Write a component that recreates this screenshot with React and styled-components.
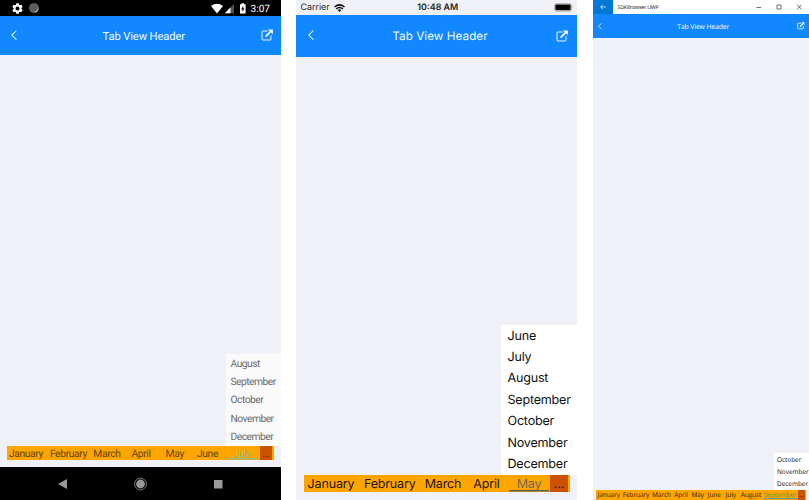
import React from "react";
import styled, { createGlobalStyle, ThemeProvider, css } from "styled-components";

const GlobalStyle = createGlobalStyle`
  * { box-sizing: border-box; }
  body { margin: 0; background: #fff; overflow: hidden; text-rendering: geometricPrecision; }
`;

const android = {
  font: 'Roboto, sans-serif',
  width: 281,
  header: { height: 38.5, font: 11.2, spacing: -0.12, left: 10.5, right: 8, icon: 12, up: 0, stroke: 1, shift: 4, drop: 2.5 },
  tabs: { height: 14, font: 10.3, spacing: -0.35, color: "#614500", margin: "0 7px 7px", selected: "#7fbf8d", line: 1.5, drop: 1 },
  menu: { width: 55.5, row: 18.3, pad: 5, font: 10.3, spacing: -0.53, color: "#6c6c6c", bg: "#fafafa", up: 0.7, drop: 1.6 },
  more: { width: 12.5, margin: "0 2px 0 0", color: "#642800" },
};

const ios = {
  font: 'Inter, sans-serif',
  width: 281,
  header: { height: 42, font: 11.7, spacing: 0.05, left: 12, right: 9, icon: 12, up: 1, stroke: 1, shift: 4, drop: 0 },
  tabs: { height: 17, font: 12.5, spacing: -0.15, color: "#1c1300", margin: "0 7.5px 8px", selected: "#6e6a5c", line: 1.5, drop: 2.5 },
  menu: { width: 76, row: 21.4, pad: 6.5, font: 12.6, spacing: -0.23, color: "#111", bg: "#fff", up: 0.7, drop: 2 },
  more: { width: 18, margin: "0 1.5px 0 0", color: "#2a1000" },
};

const uwp = {
  font: '"Open Sans", "Noto Sans", sans-serif',
  width: 216,
  header: { height: 24, font: 6.8, spacing: -0.1, left: 5, right: 4.5, icon: 7.5, up: 0, stroke: 1.3, shift: 4, drop: 0.5 },
  tabs: { height: 9.5, font: 6.5, spacing: -0.08, color: "#302100", margin: "0 3px 0.5px", selected: "#5c8e72", line: 1, drop: 0.5 },
  menu: { width: 35.5, row: 12.3, pad: 3.5, font: 6.5, spacing: -0.05, color: "#111", bg: "#fff", up: 0.3, drop: 1 },
  more: { width: 7, margin: "0 1px 0 0", color: "#3a1600" },
};

const Page = styled.main`
  display: flex;
  width: 809px;
  height: 500px;
  background: #fff;
`;

const Device = styled.section`
  display: flex;
  flex-direction: column;
  flex: none;
  width: ${(p) => p.theme.width}px;
  height: 500px;
  margin-left: ${(p) => p.$gap || 0}px;
  background: #f0f1f6;
  font-family: ${(p) => p.theme.font};
  overflow: hidden;
`;

const Header = styled.header`
  display: grid;
  grid-template-columns: 1fr auto 1fr;
  align-items: center;
  flex: none;
  height: ${(p) => p.theme.header.height}px;
  padding: 0 ${(p) => p.theme.header.right}px ${(p) => p.theme.header.up}px ${(p) => p.theme.header.left}px;
  background: #1188ff;
  color: #f2f8ff;

  svg { display: block; }
  svg:last-child { justify-self: end; }
`;

const Title = styled.h1`
  margin: ${(p) => p.theme.header.drop}px 0 0 ${(p) => p.theme.header.shift}px;
  font-size: ${(p) => p.theme.header.font}px;
  font-weight: 400;
  letter-spacing: ${(p) => p.theme.header.spacing}px;
  white-space: nowrap;
`;

const Content = styled.div`
  display: flex;
  flex: 1;
  min-height: 0;
  flex-direction: column;
  justify-content: flex-end;
`;

const Menu = styled.ul`
  align-self: flex-end;
  width: ${(p) => p.theme.menu.width}px;
  margin: 0;
  padding: 0 0 ${(p) => p.theme.menu.up}px;
  list-style: none;
  background: ${(p) => p.theme.menu.bg};
  color: ${(p) => p.theme.menu.color};
`;

const MenuItem = styled.li`
  height: ${(p) => p.theme.menu.row}px;
  padding-left: ${(p) => p.theme.menu.pad}px;
  font-size: ${(p) => p.theme.menu.font}px;
  line-height: ${(p) => p.theme.menu.row + p.theme.menu.drop}px;
  letter-spacing: ${(p) => p.theme.menu.spacing}px;
  white-space: nowrap;
`;

const TabBar = styled.nav`
  display: flex;
  flex: none;
  height: ${(p) => p.theme.tabs.height}px;
  margin: ${(p) => p.theme.tabs.margin};
  background: #ffa500;
`;

const Tab = styled.div`
  flex: none;
  width: ${(p) => p.$width}px;
  height: 100%;
  color: ${(p) => p.theme.tabs.color};
  font-size: ${(p) => p.theme.tabs.font}px;
  letter-spacing: ${(p) => p.theme.tabs.spacing}px;
  line-height: ${(p) => p.theme.tabs.height + p.theme.tabs.drop}px;
  text-align: center;
  white-space: nowrap;
  ${(p) => p.$selected && css`
    color: ${p.theme.tabs.selected};
    background: linear-gradient(${p.$line}, ${p.$line}) center bottom 0.6px / calc(100% - 2px) ${p.theme.tabs.line}px no-repeat;
  `}
`;

const More = styled.div`
  flex: none;
  width: ${(p) => p.theme.more.width}px;
  height: 100%;
  margin: ${(p) => p.theme.more.margin};
  margin-left: auto;
  background: #cb5200;
  color: ${(p) => p.theme.more.color};
  font-size: ${(p) => p.theme.tabs.font}px;
  line-height: ${(p) => p.theme.tabs.height + p.theme.tabs.drop}px;
  text-align: center;
`;

const AndroidStatus = styled.div`
  display: flex;
  align-items: center;
  flex: none;
  height: 16px;
  padding: 0 11px 0 12px;
  background: #000;
  color: #fff;
  font-size: 10.1px;
`;

const StatusIcons = styled.div`
  display: flex;
  align-items: center;
  gap: ${(p) => p.$gap}px;
  margin-left: ${(p) => (p.$end ? "auto" : "0")};
`;

const StatusTime = styled.span`
  padding-top: 2px;
`;

const AndroidNav = styled.div`
  display: grid;
  grid-template-columns: 101px 78px 78px;
  align-items: center;
  flex: none;
  height: 33px;
  background: #000;
  svg { justify-self: end; display: block; }
`;

const IosStatus = styled.div`
  display: grid;
  grid-template-columns: 1fr auto 1fr;
  align-items: center;
  flex: none;
  height: 15px;
  padding: 0 3px 0 4.5px;
  color: #222;
  font-size: 8.9px;
`;

const Carrier = styled.div`
  display: flex;
  align-items: center;
  gap: 4px;
`;

const Clock = styled.strong`
  margin-left: 1px;
  font-weight: 600;
`;

const BatteryBox = styled.div`
  display: flex;
  justify-content: flex-end;
`;

const WindowBar = styled.div`
  display: flex;
  align-items: center;
  flex: none;
  height: 14px;
  background: #fff;
`;

const WindowBack = styled.div`
  display: grid;
  place-items: center;
  width: 19.5px;
  height: 14px;
  background: #0078d7;
`;

const WindowTitle = styled.span`
  margin-left: 5px;
  color: #222;
  font-size: 5.4px;
  line-height: 13px;
  letter-spacing: -0.26px;
`;

const WindowButtons = styled.div`
  margin-left: auto;
  padding-right: 7px;
  svg { display: block; }
`;

const BackIcon = ({ height, stroke }) => (
  <svg width={height * 0.6} height={height} viewBox="0 0 6 10" fill="none" stroke="currentColor" strokeWidth={stroke}>
    <path d="M5.3 .5 .8 5l4.5 4.5" />
  </svg>
);

const OpenIcon = ({ size, stroke }) => (
  <svg width={size} height={size} viewBox="0 0 12 12" fill="none" stroke="currentColor" strokeWidth={stroke}>
    <path d="M6.8 2H1.800Q1 2 1 2.800v7.400q0 .8.8.8h7.400q.8 0 .8-.8V6.500" />
    <path d="m4.600 7.600 5.400-5.400" strokeWidth="1.800" />
    <path d="M7 .4h4.900v4.900z" fill="currentColor" stroke="none" />
  </svg>
);

const GearIcon = () => (
  <svg width="11" height="11" viewBox="2 2 20 20" fill="#fff">
    <path d="M19.14 12.94c.04-.3.06-.61.06-.94s-.02-.64-.07-.94l2.03-1.58a.5.5 0 0 0 .12-.61l-1.92-3.32a.5.5 0 0 0-.59-.22l-2.39.96a7 7 0 0 0-1.62-.94l-.36-2.54A.5.5 0 0 0 13.92 2.4h-3.84a.5.5 0 0 0-.47.41l-.36 2.54a7 7 0 0 0-1.62.94l-2.39-.96a.5.5 0 0 0-.59.22L2.74 8.87a.5.5 0 0 0 .12.61l2.03 1.58a6 6 0 0 0 0 1.88l-2.03 1.58a.5.5 0 0 0-.12.61l1.92 3.32c.12.22.37.29.59.22l2.39-.96c.5.38 1.03.7 1.62.94l.36 2.54c.05.24.24.41.47.41h3.84c.24 0 .44-.17.47-.41l.36-2.54a7 7 0 0 0 1.62-.94l2.39.96c.22.08.47 0 .59-.22l1.92-3.32a.5.5 0 0 0-.12-.61zM12 15.6A3.6 3.6 0 1 1 12 8.4a3.6 3.6 0 0 1 0 7.2z" />
  </svg>
);

const SyncIcon = () => (
  <svg width="10" height="10" viewBox="0 0 10 10">
    <circle cx="5" cy="5" r="4.8" fill="#777" />
    <circle cx="4.700" cy="4.700" r="4" fill="#5c5c5c" />
    <path d="M9.300 5.800A4.500 4.500 0 0 1 5.800 9.300" fill="none" stroke="#ccc" strokeWidth=".9" />
  </svg>
);

const AndroidIcons = () => (
  <svg width="36" height="12" viewBox="0 0 36 12" fill="#fff">
    <path d="M0 3.900Q6-.5 12 3.900L6 11.400z" />
    <path d="M23 2v9.200h-9.200z" fill="#505050" />
    <path d="M19.500 5.500v5.700h-5.700z" />
    <path fillRule="evenodd" d="M29 2.200h1.500v-1h2.600v1h1.500v9.200H29zM32.300 3.700l-2.100 3.500h1.200v2.800L33.500 6.500h-1.200z" />
  </svg>
);

const WifiIcon = () => (
  <svg width="11" height="8" viewBox="0 0 11 8" fill="none" stroke="#111" strokeWidth="1.5">
    <path d="M.5 3Q5.500-1.300 10.500 3M2.200 4.900Q5.500 2 8.800 4.900" />
    <path d="M3.700 6.100Q5.500 4.600 7.300 6.100L5.500 8z" fill="#111" stroke="none" />
  </svg>
);

const BatteryIcon = () => (
  <svg width="20" height="9" viewBox="0 0 20 9">
    <rect x=".5" y=".6" width="17" height="7.600" rx="1.800" fill="none" stroke="#999" strokeWidth=".7" />
    <rect x="1.400" y="1.500" width="15.200" height="5.800" rx="1" fill="#000" />
    <path d="M18.500 3.200q1 1.200 0 2.400z" fill="#999" />
  </svg>
);

const months = ["January", "February", "March", "April", "May", "June", "July", "August", "September", "October", "November", "December"];

function TabView({ widths, menuFrom, line }) {
  return (
    <Content>
      <Menu>
        {months.slice(menuFrom).map((m) => <MenuItem key={m}>{m}</MenuItem>)}
      </Menu>
      <TabBar>
        {widths.map((w, i) => (
          <Tab key={months[i]} $width={w} $selected={i === widths.length - 1} $line={line}>{months[i]}</Tab>
        ))}
        <More>...</More>
      </TabBar>
    </Content>
  );
}

function AppHeader({ theme }) {
  return (
    <Header>
      <BackIcon height={theme.header.icon * 0.85} stroke={theme.header.stroke} />
      <Title>Tab View Header</Title>
      <OpenIcon size={theme.header.icon} stroke={theme.header.stroke} />
    </Header>
  );
}

export default function App() {
  return (
    <Page>
      <GlobalStyle />
      <ThemeProvider theme={android}>
        <Device>
          <AndroidStatus>
            <StatusIcons $gap={6}><GearIcon /><SyncIcon /></StatusIcons>
            <StatusIcons $gap={4} $end><AndroidIcons /><StatusTime>3:07</StatusTime></StatusIcons>
          </AndroidStatus>
          <AppHeader theme={android} />
          <TabView widths={[38, 47, 30, 38, 29.5, 36, 33]} menuFrom={7} line="#8fbd79" />
          <AndroidNav>
            <svg width="43" height="14" viewBox="0 0 43 14"><path d="M0 7 9 2v10z" fill="#999" /></svg>
            <svg width="45" height="14" viewBox="0 0 45 14">
              <circle cx="6.500" cy="7" r="5.900" fill="none" stroke="#999" strokeWidth=".8" />
              <circle cx="6.500" cy="7" r="4.400" fill="#999" />
            </svg>
            <svg width="43" height="14" viewBox="0 0 43 14"><path d="M0 3h8.500v8.500H0z" fill="#999" /></svg>
          </AndroidNav>
        </Device>
      </ThemeProvider>
      <ThemeProvider theme={ios}>
        <Device $gap={15}>
          <IosStatus>
            <Carrier>Carrier <WifiIcon /></Carrier>
            <Clock>10:48 AM</Clock>
            <BatteryBox><BatteryIcon /></BatteryBox>
          </IosStatus>
          <AppHeader theme={ios} />
          <TabView widths={[55, 62.5, 44, 43, 42]} menuFrom={5} line="#5c6257" />
        </Device>
      </ThemeProvider>
      <ThemeProvider theme={uwp}>
        <Device $gap={16}>
          <WindowBar>
            <WindowBack>
              <svg width="6" height="6" viewBox="0 0 6 6" fill="none" stroke="#fff" strokeWidth=".7"><path d="M6 3H.6M3 .6.600 3 3 5.400" /></svg>
            </WindowBack>
            <WindowTitle>SDKBrowser.UWP</WindowTitle>
            <WindowButtons>
              <svg width="46" height="6" viewBox="0 0 46 6" fill="none" stroke="#333" strokeWidth=".7">
                <path d="M.5 3.500h4.500M21 1h4v4h-4zM41 .7l4.700 4.700M45.700.7 41 5.400" />
              </svg>
            </WindowButtons>
          </WindowBar>
          <AppHeader theme={uwp} />
          <TabView widths={[25.500, 29, 22, 17, 16.5, 16.5, 16.5, 24, 34.500]} menuFrom={9} line="#4c9f9b" />
        </Device>
      </ThemeProvider>
    </Page>
  );
}
